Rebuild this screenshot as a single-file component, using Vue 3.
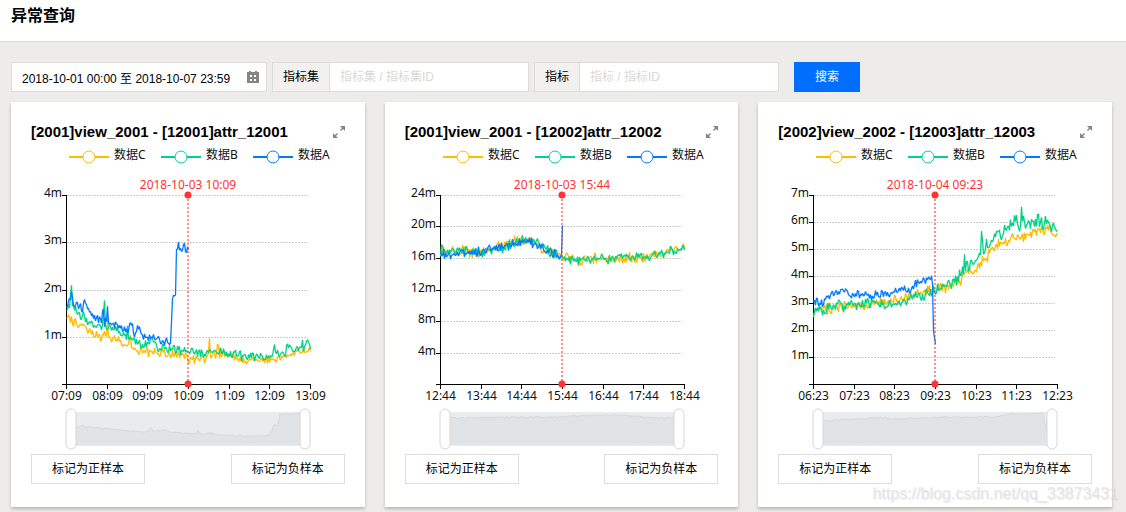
<script setup>
import { computed, onBeforeUnmount, onMounted, ref } from 'vue'

const PLOT_LEFT = 35
const PLOT_RIGHT_GAP = 35
const PLOT_TOP = 53
const PLOT_HEIGHT = 189
const BASE_SPAN = 244
const CHART_HEIGHT = 312
const BAND_TOP = 270
const BAND_HEIGHT = 34

const period = ref('2018-10-01 00:00 至 2018-10-07 23:59')
const viewKey = ref('')
const attrKey = ref('')

const chartWidth = ref(314)
const grid = ref(null)
let observer

function measure() {
  const card = grid.value?.querySelector('.card')
  if (card) chartWidth.value = Math.round(card.clientWidth - 40)
}

onMounted(() => {
  measure()
  observer = new ResizeObserver(measure)
  observer.observe(grid.value)
})
onBeforeUnmount(() => observer?.disconnect())

const legend = [
  { name: '数据C', tone: 'c' },
  { name: '数据B', tone: 'b' },
  { name: '数据A', tone: 'a' }
]

// Each series is a list of [position, value] knots; position runs from 0 to 244.
const panels = [
  {
    title: '[2001]view_2001 - [12001]attr_12001',
    moment: '2018-10-03 10:09',
    max: 4,
    step: 1,
    times: ['07:09', '08:09', '09:09', '10:09', '11:09', '12:09', '13:09'],
    series: [
      { tone: 'c', noise: 0.1, seed: 3, knots: [[0, 1.4], [6, 1.35], [12, 1.25], [19, 1.3], [20, 1.15], [25, 1.05], [32, 1.02], [40, 1.05], [41, 1.3], [42, 1], [50, 0.95], [60, 0.82], [64, 1], [65, 0.75], [75, 0.7], [95, 0.67], [115, 0.62], [125, 0.55], [137, 0.52], [142, 0.65], [143, 0.92], [144, 0.65], [150, 0.62], [151, 0.83], [153, 0.65], [165, 0.62], [172, 0.52], [185, 0.52], [205, 0.52], [220, 0.62], [235, 0.67], [244, 0.7]] },
      { tone: 'b', noise: 0.1, seed: 11, knots: [[0, 1.6], [3, 1.72], [5, 2.06], [6, 1.65], [15, 1.45], [17, 1.6], [19, 1.38], [25, 1.3], [30, 1.22], [36, 1.25], [38, 1.7], [39, 1.2], [50, 1.15], [60, 1.05], [61, 1.25], [62, 1], [70, 0.9], [82, 0.8], [86, 0.97], [88, 0.93], [91, 0.78], [110, 0.75], [125, 0.72], [138, 0.68], [152, 0.7], [165, 0.64], [185, 0.6], [205, 0.6], [208, 0.82], [210, 0.65], [220, 0.72], [223, 0.9], [225, 0.74], [234, 0.78], [236, 0.88], [237, 0.74], [241, 0.95], [244, 0.75]] },
      { tone: 'a', noise: 0.1, seed: 23, knots: [[0, 1.6], [4, 1.9], [7, 1.75], [16, 1.6], [18, 1.77], [20, 1.6], [27, 1.45], [35, 1.33], [37, 1.55], [38, 1.3], [40, 1.35], [41, 1.75], [42, 1.28], [50, 1.28], [60, 1.13], [66, 1.3], [68, 1.06], [72, 1.2], [75, 1.05], [80, 1], [87, 1.05], [93, 0.93], [104, 0.88], [106, 1.9], [109, 1.85], [110, 2.9], [112, 2.98], [114, 2.85], [117, 2.9], [118, 3.03], [119, 2.8], [122, 2.85]] }
    ],
    overview: [[0, 18], [10, 15], [12, 12], [14, 15], [30, 16], [50, 18], [72, 20], [78, 19], [80, 15], [82, 19], [95, 18], [100, 20], [125, 22], [127, 19], [129, 22], [140, 21], [150, 23], [170, 24], [196, 24], [200, 20], [203, 13], [207, 13], [209, 2], [225, 2], [228, 1], [230, 3], [234, 2]]
  },
  {
    title: '[2001]view_2001 - [12002]attr_12002',
    moment: '2018-10-03 15:44',
    max: 24,
    step: 4,
    times: ['12:44', '13:44', '14:44', '15:44', '16:44', '17:44', '18:44'],
    series: [
      { tone: 'c', noise: 0.7, seed: 5, knots: [[0, 16.8], [20, 16.9], [40, 16.9], [52, 17.2], [62, 17.5], [72, 18.3], [80, 18.3], [88, 18], [98, 17.7], [105, 17.1], [115, 16.4], [122, 16.2], [135, 15.8], [160, 15.9], [185, 15.9], [200, 16.1], [215, 16.4], [232, 17.1], [244, 17.1]] },
      { tone: 'b', noise: 0.65, seed: 17, knots: [[0, 17.1], [20, 17], [40, 16.9], [52, 17.1], [62, 17.3], [72, 18], [80, 18.2], [88, 18.1], [98, 17.9], [105, 17.1], [115, 16.4], [122, 16.2], [135, 15.8], [160, 15.9], [190, 16.1], [215, 16.4], [232, 16.9], [244, 17.1]] },
      { tone: 'a', noise: 0.6, seed: 29, knots: [[0, 16.5], [20, 16.7], [40, 16.9], [52, 17.2], [65, 17.5], [75, 18.1], [84, 18.4], [90, 18], [98, 17.8], [105, 17], [115, 16.5], [121, 16.4], [122, 20.2]] }
    ],
    overview: [[0, 6], [20, 6], [60, 5], [110, 5], [150, 3], [175, 3], [200, 5], [215, 6], [234, 6]]
  },
  {
    title: '[2002]view_2002 - [12003]attr_12003',
    moment: '2018-10-04 09:23',
    max: 7,
    step: 1,
    times: ['06:23', '07:23', '08:23', '09:23', '10:23', '11:23', '12:23'],
    series: [
      { tone: 'c', noise: 0.22, seed: 7, knots: [[0, 2.65], [10, 2.75], [20, 2.9], [40, 2.95], [60, 3], [75, 3.1], [90, 3.2], [105, 3.4], [120, 3.5], [130, 3.6], [145, 3.85], [160, 4.15], [166, 4.5], [176, 4.8], [184, 5.25], [192, 5.2], [205, 5.5], [220, 5.55], [235, 5.75], [240, 5.5], [244, 5.6]] },
      { tone: 'b', noise: 0.23, seed: 19, knots: [[0, 2.65], [10, 2.8], [25, 2.95], [60, 3], [85, 3], [100, 3.2], [115, 3.45], [130, 3.6], [148, 4.05], [150, 4.2], [151, 4.75], [152, 4.4], [160, 4.5], [167, 4.7], [168, 5.6], [170, 4.95], [176, 5.3], [183, 5.65], [187, 5.5], [192, 5.8], [199, 6.05], [204, 6], [206, 5.7], [207, 5.9], [208, 6.35], [210, 6.05], [215, 5.9], [222, 6.1], [232, 6], [240, 5.9], [244, 5.7]] },
      { tone: 'a', noise: 0.18, seed: 31, knots: [[0, 3.05], [8, 3], [15, 3.3], [25, 3.45], [40, 3.35], [60, 3.3], [80, 3.4], [95, 3.5], [102, 3.8], [112, 3.85], [118, 3.9], [119, 3.7], [120, 1.9], [121, 1.6], [122, 1.5]] }
    ],
    overview: [[0, 10], [30, 7], [45, 7], [60, 5], [75, 7], [100, 6], [135, 5], [180, 5], [190, 2], [210, 2], [225, 1], [227, 12], [231, 26], [234, 28]]
  }
]

const plotRight = computed(() => chartWidth.value - PLOT_RIGHT_GAP)
const plotSpan = computed(() => plotRight.value - PLOT_LEFT)
const markX = computed(() => PLOT_LEFT + Math.round(plotSpan.value / 2))
const legendX = computed(() => Math.round(chartWidth.value / 2) - 119)

function jitter(seed) {
  let state = seed * 7919
  return () => {
    state = (state * 16807) % 2147483647
    return (state / 2147483647) * 2 - 1
  }
}

function interpolate(knots, x) {
  let i = 1
  while (i < knots.length - 1 && knots[i][0] < x) i++
  const [x0, y0] = knots[i - 1]
  const [x1, y1] = knots[i]
  return y0 + ((y1 - y0) * (x - x0)) / (x1 - x0)
}

function linePoints(line, max) {
  const next = jitter(line.seed)
  const end = line.knots[line.knots.length - 1][0]
  const points = []
  for (let x = 0; x <= end; x += 1) {
    const amount = (next() + next()) * 0.65 * line.noise
    const value = interpolate(line.knots, x) + (x === end ? 0 : amount)
    const px = PLOT_LEFT + 0.5 + (x / BASE_SPAN) * plotSpan.value
    const py = PLOT_TOP + 0.5 + PLOT_HEIGHT * (1 - value / max)
    points.push(`${px.toFixed(1)},${py.toFixed(1)}`)
  }
  return points.join(' ')
}

function overviewPoints(knots) {
  const next = jitter(41)
  const left = PLOT_LEFT + 5
  const span = plotSpan.value - 10
  const points = []
  for (let x = 0; x <= 234; x += 1) {
    const y = Math.max(1, interpolate(knots, x) + next() * 0.8)
    points.push(`${(left + (x / 234) * span).toFixed(1)},${(BAND_TOP + y).toFixed(1)}`)
  }
  return points.join(' ')
}

function overviewArea(knots) {
  const bottom = BAND_TOP + BAND_HEIGHT - 1
  return `${overviewPoints(knots)} ${plotRight.value - 5},${bottom} ${PLOT_LEFT + 5},${bottom}`
}

function yTicks(panel) {
  const ticks = []
  for (let v = panel.step; v <= panel.max; v += panel.step) {
    ticks.push({ label: `${v}m`, y: PLOT_TOP + Math.round(PLOT_HEIGHT * (1 - v / panel.max)) + 0.5 })
  }
  return ticks
}

function tickX(index) {
  return PLOT_LEFT + Math.round((plotSpan.value * index) / 6) + 0.5
}
</script>

<template>
  <div class="page">
    <header class="header">
      <h1>异常查询</h1>
    </header>

    <main class="content">
      <form class="filters" @submit.prevent>
        <div class="period">
          <input v-model="period" type="text" aria-label="时间范围" readonly />
          <svg class="calendar" width="12" height="12" viewBox="0 0 12 12" aria-hidden="true">
            <path d="M0 1h2V0h2v1h4V0h2v1h2v11H0z" fill="#888480" />
            <path d="M2 4h8v6H2z" fill="#fff" />
            <path d="M5 4h2v6H5zM2 6h8v2H2zM2 4h1v6H2zM9 4h1v6H9z" fill="#888480" />
          </svg>
        </div>
        <div class="field">
          <label for="view-key">指标集</label>
          <input id="view-key" v-model="viewKey" type="text" placeholder="指标集 / 指标集ID" />
        </div>
        <div class="field">
          <label for="attr-key">指标</label>
          <input id="attr-key" v-model="attrKey" type="text" placeholder="指标 / 指标ID" />
        </div>
        <button class="search" type="submit">搜索</button>
      </form>

      <div ref="grid" class="cards">
        <section v-for="panel in panels" :key="panel.title" class="card">
          <div class="card-head">
            <h2>{{ panel.title }}</h2>
            <button class="expand" type="button" aria-label="放大">
              <svg width="12" height="12" viewBox="0 0 12 12" aria-hidden="true">
                <path d="M7 0h5v5l-2-2-2 2-1-1 2-2zM0 7l2 2 2-2 1 1-2 2 2 2H0z" fill="#888480" />
              </svg>
            </button>
          </div>

          <svg class="chart" :height="CHART_HEIGHT" role="img" :aria-label="panel.title">
            <g v-for="(item, i) in legend" :key="item.name" :class="'tone-' + item.tone">
              <line class="legend-line" :x1="legendX + i * 92" y1="15" :x2="legendX + i * 92 + 40" y2="15" />
              <circle class="legend-dot" :cx="legendX + i * 92 + 20" cy="15" r="6" />
              <text class="label" :x="legendX + i * 92 + 45" y="17">{{ item.name }}</text>
            </g>

            <g v-for="tick in yTicks(panel)" :key="tick.label">
              <line class="grid-line" :x1="PLOT_LEFT + 1" :y1="tick.y" :x2="plotRight - 2" :y2="tick.y" />
              <line class="axis" :x1="PLOT_LEFT - 4" :y1="tick.y" :x2="PLOT_LEFT" :y2="tick.y" />
              <text class="label end" :x="PLOT_LEFT - 4" :y="tick.y + 1">{{ tick.label }}</text>
            </g>

            <line class="axis" :x1="PLOT_LEFT - 4" y1="242.5" :x2="plotRight + 1" y2="242.5" />
            <line class="axis" :x1="PLOT_LEFT + 0.5" :y1="PLOT_TOP" :x2="PLOT_LEFT + 0.5" y2="243" />
            <g v-for="(time, i) in panel.times" :key="time">
              <line class="axis" :x1="tickX(i)" y1="243" :x2="tickX(i)" y2="247" />
              <text class="label mid" :x="tickX(i)" y="258">{{ time }}</text>
            </g>

            <polyline
              v-for="line in panel.series"
              :key="line.tone"
              class="series"
              :class="'tone-' + line.tone"
              :points="linePoints(line, panel.max)"
            />

            <line class="mark-line" :x1="markX" :y1="PLOT_TOP" :x2="markX" y2="242" />
            <circle class="mark-dot" :cx="markX" cy="53" r="3.5" />
            <circle class="mark-dot" :cx="markX" cy="242" r="3.5" />
            <text class="label mid mark-text" :x="markX" y="47">{{ panel.moment }}</text>

            <rect class="band" :x="PLOT_LEFT + 5" :y="BAND_TOP" :width="plotSpan - 10" :height="BAND_HEIGHT" />
            <polygon class="band-area" :points="overviewArea(panel.overview)" />
            <polyline class="band-line" :points="overviewPoints(panel.overview)" />
            <rect class="handle" :x="PLOT_LEFT" y="267" width="10" height="40" rx="5" />
            <rect class="handle" :x="plotRight - 10" y="267" width="10" height="40" rx="5" />
          </svg>

          <div class="actions">
            <button type="button">标记为正样本</button>
            <button type="button">标记为负样本</button>
          </div>
        </section>
      </div>
    </main>

    <span class="watermark">https://blog.csdn.net/qq_33873431</span>
  </div>
</template>

<style>
body {
  background: #edecea;
}
</style>

<style scoped>
.page {
  position: relative;
  box-sizing: border-box;
  min-height: 100vh;
  color: #000;
  font: 12px/18px "Liberation Sans", "Noto Sans CJK SC", sans-serif;
}

.page *,
.page *::before {
  box-sizing: border-box;
}

.header {
  padding: 0 11px 9px;
  border-bottom: 1px solid #dddcd9;
  background: #fff;
}

h1 {
  margin: 0;
  font-size: 16px;
  line-height: 32px;
}

input,
button {
  margin: 0;
  border-radius: 0;
  color: inherit;
  font: inherit;
}

.content {
  padding: 20px 14px 5px 11px;
}

.filters {
  display: flex;
  gap: 5px;
  height: 30px;
  margin-bottom: 10px;
}

.period,
.field {
  display: flex;
  align-items: center;
  border: 1px solid #dddcd7;
  background: #fff;
}

.period {
  width: 256px;
  padding-right: 7px;
}

.calendar {
  flex: none;
}

input {
  flex: 1;
  min-width: 0;
  height: 28px;
  padding: 0 10px;
  border: 0;
  outline: 0;
  background: transparent;
}

input::placeholder {
  color: #dbd8d4;
  opacity: 1;
}

.field label {
  padding: 0 10px;
  border-right: 1px solid #dddcd7;
  background: #f2f1ef;
  line-height: 28px;
}

.field input {
  flex: none;
  width: 198px;
}

.search {
  width: 66px;
  margin-left: 10px;
  border: 0;
  background: #006eff;
  color: #fff;
}

.cards {
  display: grid;
  grid-template-columns: repeat(3, 1fr);
  gap: 20px;
}

.card {
  min-width: 0;
  padding: 20px 20px 23px;
  background: #fff;
  box-shadow: 0 2px 3px rgba(60, 55, 30, 0.3);
}

.card-head {
  display: flex;
  align-items: center;
  justify-content: space-between;
  height: 20px;
}

h2 {
  margin: 0;
  font-size: 15px;
  line-height: 18px;
  white-space: nowrap;
}

.expand {
  display: flex;
  padding: 0;
  border: 0;
  background: none;
}

.chart {
  display: block;
  width: 100%;
  overflow: visible;
}

.tone-c {
  --tone: #ffbb00;
}

.tone-b {
  --tone: #00d387;
}

.tone-a {
  --tone: #007bff;
}

.legend-line {
  stroke: var(--tone);
  stroke-width: 2;
}

.legend-dot {
  fill: #fff;
  stroke: var(--tone);
}

.series {
  fill: none;
  stroke: var(--tone);
  stroke-width: 1.3;
  stroke-linejoin: bevel;
}

.label {
  fill: #111;
  font-family: "Noto Sans", "Noto Sans CJK SC", sans-serif;
  font-size: 12px;
}

.end {
  text-anchor: end;
}

.mid {
  text-anchor: middle;
}

.axis {
  stroke: #000;
}

.grid-line {
  stroke: #cfcec9;
  stroke-dasharray: 2 1;
}

.mark-line {
  stroke: #ff3333;
  stroke-width: 2;
  stroke-dasharray: 2 2;
  opacity: 0.55;
}

.mark-dot {
  fill: #ff3333;
}

.mark-text {
  fill: #ff3333;
}

.band {
  fill: #e8ecef;
}

.band-area {
  fill: #e0e4e7;
}

.band-line {
  fill: none;
  stroke: #d6d9db;
}

.handle {
  fill: #fff;
  stroke: #d8d6d3;
}

.actions {
  display: flex;
  justify-content: space-between;
}

.actions button {
  width: 114px;
  height: 30px;
  padding: 0;
  border: 1px solid #dddddb;
  background: #fff;
}

.watermark {
  position: absolute;
  right: 8px;
  bottom: 8px;
  color: rgba(225, 225, 225, 0.75);
  font-size: 16px;
  line-height: 20px;
  text-shadow: 1px 1px 1px rgba(150, 150, 150, 0.2);
  pointer-events: none;
}
</style>
